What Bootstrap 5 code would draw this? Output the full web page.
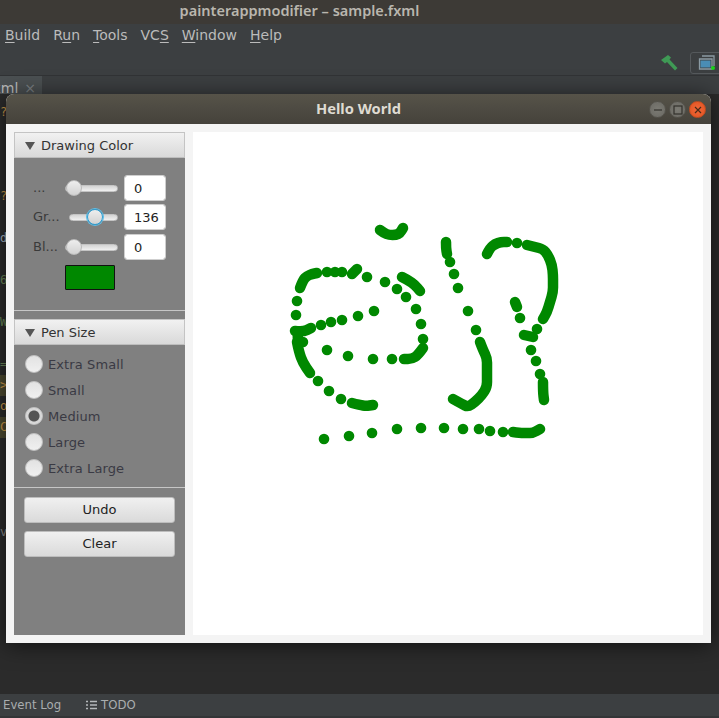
<!DOCTYPE html>
<html lang="en">
<head>
  <meta charset="UTF-8">
  <title>Hello World</title>
  <link href="https://cdn.jsdelivr.net/npm/bootstrap@5.3.0/dist/css/bootstrap.min.css" rel="stylesheet">
  <style>
    html, body { height: 100%; margin: 0; overflow: hidden; background: #2b2b2b; }
    .ide { width: 719px; height: 718px; position: relative; overflow: hidden; font-family: "DejaVu Sans", sans-serif; color: #bbb; }
    .ide-title { height: 24px; padding: 0 120px 4px 0; background: #3d3a36; color: #b9b6ae; font: 600 14.5px/20px "Noto Sans", sans-serif; }
    .ide-menu { height: 26px; background: #3c3f41; padding-left: 5px; font-size: 14px; line-height: 22px; gap: 13px; }
    .ide-menu u { text-underline-offset: 2px; }
    .ide-tools { height: 25px; background: #3c3f41; gap: 12px; }
    .run-box { width: 34px; height: 22px; margin-right: -5px; border: 1px solid #55595c; border-radius: 3px; }
    .ide-tabs { height: 19px; background: #3c3f41; border-top: 1px solid #313335; }
    .ide-tab { width: 42px; height: 18px; background: #4b5052; font-size: 14px; line-height: 25px; padding-right: 6px; gap: 6px; overflow: hidden; white-space: nowrap; }
    .ide-tab span:last-child { color: #7d8184; }
    .ide-editor { height: 600px; background: #2b2b2b; }
    .ide-gutter { width: 6px; overflow: hidden; font: 12px/21px "DejaVu Sans Mono", monospace; white-space: nowrap; padding-top: 8px; }
    .ide-status { height: 24px; background: #3c3f41; border-bottom: 2px solid #333537; padding-left: 3px; font-size: 11.7px; line-height: 22px; color: #a9adaf; gap: 25px; }
    .gutter-mark { background: #4d4a30; }
    .gutter-far { width: 8px; color: #5c5f61; }

    .fx-window { position: absolute; left: 6px; top: 94px; width: 705px; height: 549px; background: #f4f4f4; border-radius: 8px 8px 0 0; box-shadow: 0 2px 22px rgba(0,0,0,.6); }
    .fx-titlebar { height: 30px; background: linear-gradient(#565349, #45423b); border-radius: 8px 8px 0 0; position: relative; color: #dfdbd2; font: 700 14.7px/29px "Noto Sans", sans-serif; }
    .win-btns { position: absolute; right: 5px; top: 7px; gap: 3px; }
    .win-btn { width: 17px; height: 17px; border-radius: 50%; background: radial-gradient(#7b7a73, #6a6963); border: 1px solid #55534c; }
    .win-close { background: radial-gradient(#f0693a, #e2511f); border-color: #c24c20; }
    .fx-body { padding: 8px; gap: 8px; height: 519px; }
    .fx-side { width: 171px; background: #808080; font-size: 13px; }
    .fx-canvas { width: 510px; background: #fff; }
    .fx-canvas svg { display: block; }
    .pane-head { height: 26px; border: 1px solid #c4c4c4; border-bottom-color: #bdbdbd; background: linear-gradient(#f1f1f1, #d9d9d9); color: #333; padding: 1px 0 0 10px; gap: 6px; line-height: 24px; }
    .pane-arrow { width: 0; height: 0; flex: none; border: 5px solid transparent; border-top: 8px solid #555; border-bottom: 0; }
    .pane-color { height: 153px; border-bottom: 1px solid #c6c6c6; padding: 17px 19px 0 19px; }
    .slider-row { height: 26px; margin-bottom: 3px; }
    .slider-row + .slider-row + .slider-row { margin-top: 4px; }
    .slider-row label { width: 32px; flex: none; color: #3a3a3a; }
    .slider-row .form-range { width: 0; flex: 1; height: 16px; padding: 0; }
    .slider-row .form-range.focused { margin-left: 4px; }
    .form-range::-webkit-slider-runnable-track { height: 7px; border-radius: 4px; background: linear-gradient(#d4d4d4, #f0f0f0); border: 1px solid #c4c4c4; }
    .form-range::-webkit-slider-thumb { width: 16px; height: 16px; margin-top: -5.500px; background: linear-gradient(#eee, #d2d2d2); border: 1px solid #bbb; }
    .form-range.focused::-webkit-slider-thumb { border: 1px solid #2c9fd4; box-shadow: 0 0 0 1px #5fbde6; }
    .num-box { width: 42px; height: 26px; flex: none; padding: 0 0 0 9px; margin-left: 6px; font: 13px "DejaVu Sans", sans-serif; color: #222; border: 1px solid #cfcfcf; border-radius: 3px; }
    .color-box { width: 50px; height: 25px; margin: 5px 0 0 32px; background: #008800; border: 1px solid #111; border-radius: 1px; }
    .pane-gap { height: 8px; }
    .pane-size { height: 143px; border-bottom: 1px solid #c6c6c6; padding: 6px 0 0 11px; }
    .size-row { height: 26px; margin: 0; padding: 0; min-height: 0; color: #3a3a44; gap: 5px; }
    .size-row .form-check-input { width: 18px; height: 18px; margin: 0; float: none; flex: none; background-color: #e6e6e6; border: 1px solid #bdbdbd; background-image: linear-gradient(#e2e2e2, #f0f0f0); }
    .size-row .form-check-input:checked { background-color: #e6e6e6; background-image: radial-gradient(circle, #555 0 5px, #d4d4d4 6px, #eee 100%); border-color: #bdbdbd; }
    .size-row .form-check-label { opacity: 1; letter-spacing: .1px; padding-top: 1px; }
    .pane-btns { padding: 9px 10px; gap: 8px; }
    .fx-btn { height: 26px; padding: 0; font-size: 13px; line-height: 24px; color: #222; border: 1px solid #bdbdbd; border-radius: 3px; background: linear-gradient(#f0f0f0, #dadada); }
  </style>
</head>
<body>

<div class="ide">
  <div class="ide-title d-flex justify-content-center align-items-center"><span>painterappmodifier – sample.fxml</span></div>
  <div class="ide-menu d-flex">
    <span><u>B</u>uild</span>
    <span>R<u>u</u>n</span>
    <span><u>T</u>ools</span>
    <span>VC<u>S</u></span>
    <span><u>W</u>indow</span>
    <span><u>H</u>elp</span>
  </div>
  <div class="ide-tools d-flex justify-content-end align-items-center">
    <svg width="17" height="16" viewBox="0 0 17 16"><path d="M0 5 7 0 10 2.500 8.500 4.500 16.500 13 14 15.500 6 7 4 8.500Z" fill="#3f9a55"/></svg>
    <div class="run-box d-flex align-items-center justify-content-center">
      <svg width="18" height="17" viewBox="0 0 18 17"><path d="M4 2H16V12M1.500 5H14V15H1.500Z" fill="none" stroke="#8b9aa3" stroke-width="1.300"/><rect x="2.500" y="6.500" width="10" height="7" fill="#4a8db5"/><circle cx="15" cy="14" r="2" fill="#19d419"/></svg>
    </div>
  </div>
  <div class="ide-tabs">
    <div class="ide-tab d-flex justify-content-end"><span>xml</span><span>×</span></div>
  </div>
  <div class="ide-editor d-flex justify-content-between">
    <div class="ide-gutter">
      <div style="color:#cc9a4a">?</div>
      <div>&nbsp;</div><div>&nbsp;</div><div>&nbsp;</div>
      <div style="color:#cc9a4a">?</div>
      <div>&nbsp;</div>
      <div style="color:#a9b7c6">d</div>
      <div>&nbsp;</div>
      <div style="color:#6a8759">6</div>
      <div>&nbsp;</div>
      <div style="color:#6a8759">W</div>
      <div>&nbsp;</div>
      <div style="color:#6a8759">=</div>
      <div class="gutter-mark" style="color:#cc9a4a">&gt;</div>
      <div style="color:#cc9a4a">o</div>
      <div class="gutter-mark" style="color:#cc9a4a">C</div>
      <div>&nbsp;</div><div>&nbsp;</div><div>&nbsp;</div><div>&nbsp;</div>
      <div style="color:#8a8a8a">v</div>
    </div>
    <div class="ide-gutter gutter-far">
      <div>&nbsp;</div><div>&nbsp;</div><div>&nbsp;</div><div>&nbsp;</div><div>&nbsp;</div><div>&nbsp;</div>
      <div>&nbsp;&nbsp;F</div>
      <div>&nbsp;</div>
      <div>&nbsp;&nbsp;R</div>
    </div>
  </div>
  <div class="ide-status d-flex align-items-center">
    <span>Event Log</span>
    <span class="d-flex align-items-center gap-1">
      <svg width="11" height="10" viewBox="0 0 11 10"><path d="M0 1.500H2M4 1.500H11M0 5H2M4 5H11M0 8.500H2M4 8.500H11" stroke="#b4b8ba" stroke-width="1.500"/></svg>
      TODO
    </span>
  </div>

  <div class="fx-window">
    <div class="fx-titlebar text-center">
      Hello World
      <div class="win-btns d-flex">
        <div class="win-btn d-flex align-items-center justify-content-center"><svg width="10" height="10"><path d="M1 5H9" stroke="#33312c" stroke-width="1.200"/></svg></div>
        <div class="win-btn d-flex align-items-center justify-content-center"><svg width="10" height="10"><rect x="1" y="1" width="8" height="8" fill="none" stroke="#33312c" stroke-width="1.200"/></svg></div>
        <div class="win-btn win-close d-flex align-items-center justify-content-center"><svg width="10" height="10"><path d="M2 2 8 8M8 2 2 8" stroke="#4a2a18" stroke-width="1.200"/></svg></div>
      </div>
    </div>
    <div class="fx-body d-flex">
      <div class="fx-side d-flex flex-column">
        <div class="pane-head d-flex align-items-center"><i class="pane-arrow"></i><span>Drawing Color</span></div>
        <div class="pane-color">
          <div class="slider-row d-flex align-items-center">
            <label>...</label>
            <input type="range" class="form-range" min="0" max="255" value="0">
            <input type="text" class="form-control num-box" value="0">
          </div>
          <div class="slider-row d-flex align-items-center">
            <label>Gr...</label>
            <input type="range" class="form-range focused" min="0" max="255" value="136">
            <input type="text" class="form-control num-box" value="136">
          </div>
          <div class="slider-row d-flex align-items-center">
            <label>Bl...</label>
            <input type="range" class="form-range" min="0" max="255" value="0">
            <input type="text" class="form-control num-box" value="0">
          </div>
          <div class="color-box"></div>
        </div>
        <div class="pane-gap"></div>
        <div class="pane-head d-flex align-items-center"><i class="pane-arrow"></i><span>Pen Size</span></div>
        <div class="pane-size">
          <div class="form-check size-row d-flex align-items-center"><input class="form-check-input" type="radio" name="pen" id="p1"><label class="form-check-label" for="p1">Extra Small</label></div>
          <div class="form-check size-row d-flex align-items-center"><input class="form-check-input" type="radio" name="pen" id="p2"><label class="form-check-label" for="p2">Small</label></div>
          <div class="form-check size-row d-flex align-items-center"><input class="form-check-input" type="radio" name="pen" id="p3" checked><label class="form-check-label" for="p3">Medium</label></div>
          <div class="form-check size-row d-flex align-items-center"><input class="form-check-input" type="radio" name="pen" id="p4"><label class="form-check-label" for="p4">Large</label></div>
          <div class="form-check size-row d-flex align-items-center"><input class="form-check-input" type="radio" name="pen" id="p5"><label class="form-check-label" for="p5">Extra Large</label></div>
        </div>
        <div class="pane-btns d-flex flex-column">
          <button type="button" class="btn fx-btn">Undo</button>
          <button type="button" class="btn fx-btn">Clear</button>
        </div>
      </div>
      <div class="fx-canvas">
        <svg id="lienzo" width="510" height="503" viewBox="193 132 510 503"></svg>
      </div>
    </div>
  </div>
</div>

<script src="https://cdn.jsdelivr.net/npm/bootstrap@5.3.0/dist/js/bootstrap.bundle.min.js"></script>
<script>
// continuous strokes, then the loose dots
const trazos = [
  [[380,230],[384,233],[389,235],[396,235],[400,233],[403,228]],
  [[300,288],[303,280],[307,276],[312,274],[317,273]],
  [[352,274],[357,269]],
  [[402,277],[408,280],[415,285],[420,291]],
  [[295,331],[303,332],[311,328]],
  [[298,333],[297,342],[303,342]],
  [[297,342],[299,352],[303,363],[310,373]],
  [[423,348],[418,355],[412,359],[404,359]],
  [[352,403],[360,405],[366,406],[373,405]],
  [[446,242],[446,248],[447,254]],
  [[487,254],[490,248],[495,244],[501,242],[507,242]],
  [[527,245],[535,247],[543,249],[548,255],[552,265],[553,275],[553,283],[553,292],[550,302],[547,312],[543,319]],
  [[515,302],[517,307]],
  [[480,342],[483,350],[487,358],[487,367],[487,377],[487,387],[482,395],[475,402],[468,407],[462,404],[453,399]],
  [[543,382],[543,392],[544,400]],
  [[513,432],[520,433],[527,433],[533,433],[540,429]],
  [[524,335],[533,337]]
];
const puntos = [
  [297,301],[296,315],[321,325],[331,322],[342,320],[358,316],[374,311],[421,324],[416,309],[406,297],[397,289],[385,282],[367,277],
  [342,272],[335,272],[327,272],[423,339],[392,359],[373,359],[348,356],[327,350],[318,381],[329,391],[341,399],
  [324,439],[349,436],[372,433],[397,429],[421,428],[444,428],[463,429],[479,429],[490,431],[503,432],
  [450,262],[454,274],[458,288],[468,311],[476,330],[517,243],[520,318],[537,329],[531,350],[536,361],[540,374]
];

// round the corners of a stroke through the midpoints
function suavizar(t) {
  let d = `M${t[0][0]} ${t[0][1]}`;
  for (let i = 1; i < t.length - 1; i++) {
    const mx = (t[i][0] + t[i + 1][0]) / 2;
    const my = (t[i][1] + t[i + 1][1]) / 2;
    d += ` Q${t[i][0]} ${t[i][1]} ${mx} ${my}`;
  }
  const fin = t[t.length - 1];
  return d + ` L${fin[0]} ${fin[1]}`;
}

let svg = '';
trazos.forEach(t => {
  svg += `<path d="${suavizar(t)}" fill="none" stroke="#008800" stroke-width="10.5" stroke-linecap="round" stroke-linejoin="round"/>`;
});
puntos.forEach(p => {
  svg += `<circle cx="${p[0]}" cy="${p[1]}" r="5.3" fill="#008800"/>`;
});
document.getElementById('lienzo').innerHTML = svg;
</script>

</body>
</html>
